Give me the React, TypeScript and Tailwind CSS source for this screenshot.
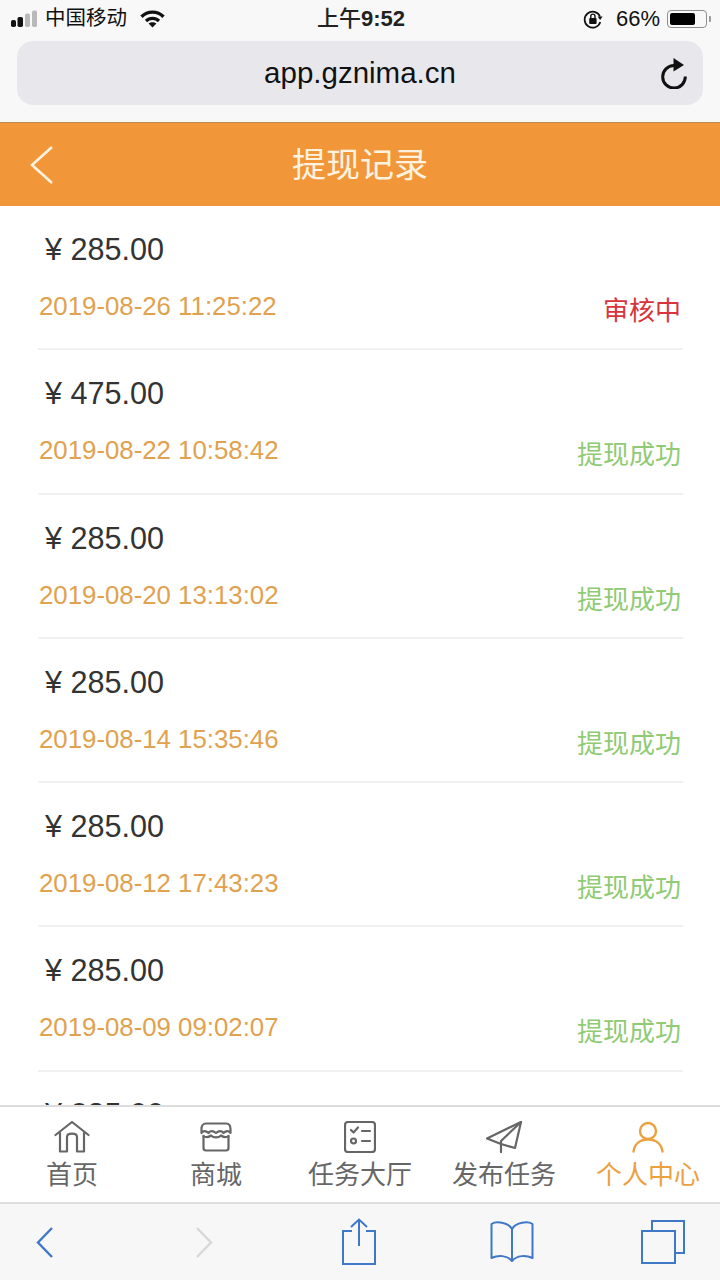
const sans = "font-['Liberation_Sans','Noto_Sans_CJK_SC',sans-serif]";

const records = [
  { amount: "285.00", time: "2019-08-26 11:25:22", status: "审核中", pending: true },
  { amount: "475.00", time: "2019-08-22 10:58:42", status: "提现成功" },
  { amount: "285.00", time: "2019-08-20 13:13:02", status: "提现成功" },
  { amount: "285.00", time: "2019-08-14 15:35:46", status: "提现成功" },
  { amount: "285.00", time: "2019-08-12 17:43:23", status: "提现成功" },
  { amount: "285.00", time: "2019-08-09 09:02:07", status: "提现成功" },
];

function Signal() {
  return (
    <svg width="27" height="18" viewBox="0 0 27 18" className="block">
      <rect x="0" y="10" width="5" height="7" rx="1.8" fill="#111" />
      <rect x="6.5" y="7" width="5.5" height="10" rx="1.8" fill="#111" />
      <rect x="14" y="3.5" width="5" height="13.5" rx="1.8" fill="#b9b9b9" />
      <rect x="21" y="0.5" width="5" height="16.5" rx="1.8" fill="#b9b9b9" />
    </svg>
  );
}

function Wifi() {
  return (
    <svg width="25" height="18" viewBox="0 0 25 18" fill="none" className="block">
      <path d="M1.5 6.8C7.5 .6 17.5 .6 23.5 6.8" stroke="#111" strokeWidth="3.4" />
      <path d="M6 11C9.6 7.4 15.4 7.4 19 11" stroke="#111" strokeWidth="3.2" />
      <path d="M8.6 13.6C10.8 11.7 14.2 11.7 16.4 13.6L12.5 17.6Z" fill="#111" />
    </svg>
  );
}

function RotationLock() {
  return (
    <svg width="20" height="20" viewBox="0 0 20 20" fill="none" className="block">
      <path d="M17 7.5A8 8 0 1 0 17.3 13" stroke="#111" strokeWidth="1.7" />
      <path d="M14.6 7.5H19.6L17.1 11Z" fill="#111" />
      <rect x="6.2" y="9" width="7.4" height="6" rx="1" fill="#111" />
      <path d="M7.8 9V7.2a2.1 2.1 0 0 1 4.2 0V9" stroke="#111" strokeWidth="1.4" />
    </svg>
  );
}

function Battery() {
  return (
    <div className="flex items-center gap-[2px]">
      <div className="w-[40px] h-[18px] rounded-[4px] border border-[#8e8e8e] p-[2px]">
        <div className="w-[25px] h-full rounded-[2px] bg-black" />
      </div>
      <div className="w-[2px] h-[6px] rounded-r-[1px] bg-[#9a9a9a]" />
    </div>
  );
}

function Refresh() {
  return (
    <svg width="28" height="32" viewBox="0 0 28 32" fill="none" className="block">
      <path d="M14 8.5A11.3 11.3 0 1 0 25.3 19.5" stroke="#111" strokeWidth="3" />
      <path d="M13.5 1L24 8L13.5 14.5Z" fill="#111" />
    </svg>
  );
}

function HomeIcon({ c }: { c: string }) {
  return (
    <svg width="36" height="34" viewBox="0 0 36 34" fill="none" stroke={c} strokeWidth="2.2" strokeLinecap="round" strokeLinejoin="round" className="block">
      <path d="M1.5 15L18 2L34.5 15" />
      <path d="M6 13V31.5H13V17C13 12.5 23 12.5 23 17V31.5H30V13" />
    </svg>
  );
}

function ShopIcon({ c }: { c: string }) {
  return (
    <svg width="32" height="30" viewBox="0 0 32 30" fill="none" stroke={c} strokeWidth="2.2" strokeLinecap="round" strokeLinejoin="round" className="block">
      <path d="M6 1.5H26C29 1.5 30.5 4 30.5 7V11C29 8.5 26 8.5 23.5 11C21.5 8.5 19 8.5 16 11C13 8.5 10.5 8.5 8.5 11C6 8.5 3 8.5 1.5 11V7C1.5 4 3 1.5 6 1.5Z" />
      <path d="M3.5 14C6 16 9 15 11 13.5C13.5 16 18.5 16 21 13.5C23 15 26 16 28.5 14" />
      <path d="M3.5 14V26C3.5 27.5 4.5 28.5 6 28.5H26C27.5 28.5 28.5 27.5 28.5 26V14" />
    </svg>
  );
}

function TaskIcon({ c }: { c: string }) {
  return (
    <svg width="32" height="32" viewBox="0 0 32 32" fill="none" stroke={c} strokeWidth="2.2" strokeLinecap="round" strokeLinejoin="round" className="block">
      <rect x="1" y="1" width="30" height="30" rx="3" />
      <path d="M7 9L9.5 11.5L14 6.5" />
      <path d="M18 10H26M18 20H26" />
      <circle cx="9.5" cy="20" r="2.5" />
    </svg>
  );
}

function SendIcon({ c }: { c: string }) {
  return (
    <svg width="36" height="32" viewBox="0 0 36 32" fill="none" stroke={c} strokeWidth="2.2" strokeLinecap="round" strokeLinejoin="round" className="block">
      <path d="M35 1L1 17.5L15 23" />
      <path d="M35 1L29 27L15 23" />
      <path d="M35 1L15 20V31" />
    </svg>
  );
}

function UserIcon({ c }: { c: string }) {
  return (
    <svg width="32" height="32" viewBox="0 0 32 32" fill="none" stroke={c} strokeWidth="2.4" strokeLinecap="round" strokeLinejoin="round" className="block">
      <circle cx="16" cy="10" r="8" />
      <path d="M1.5 30.5C2.5 23 8 18.5 16 18.5C24 18.5 29.5 23 30.5 30.5" />
    </svg>
  );
}

const tabs = [
  { label: "首页", Icon: HomeIcon },
  { label: "商城", Icon: ShopIcon },
  { label: "任务大厅", Icon: TaskIcon },
  { label: "发布任务", Icon: SendIcon },
  { label: "个人中心", Icon: UserIcon, active: true },
];

const blue = "#3f78c6";

export default function App() {
  return (
    <div className={`w-[720px] h-[1280px] flex flex-col overflow-hidden bg-white ${sans}`}>
      <div className="h-[122px] shrink-0 bg-[#f8f8f8] flex flex-col">
        <div className="h-[41px] shrink-0 grid grid-cols-3 items-center pb-[4px] pl-[11px] pr-[9px] text-[#111]">
          <div className="flex items-center">
            <Signal />
            <span className="ml-[7px] text-[20.5px] leading-none">中国移动</span>
            <span className="ml-[13px]"><Wifi /></span>
          </div>
          <div className="text-center text-[22px] leading-none text-[#222]">
            <span className="font-medium">上午</span>
            <span className="font-bold">9:52</span>
          </div>
          <div className="flex items-center justify-end">
            <RotationLock />
            <span className="ml-[13px] text-[22px] leading-none">66%</span>
            <span className="ml-[7px]"><Battery /></span>
          </div>
        </div>
        <div className="mx-[17px] h-[64px] rounded-[16px] bg-[#e8e8ec] flex items-center relative">
          <span className="flex-1 text-center text-[29.5px] leading-none text-[#111]">app.gznima.cn</span>
          <span className="absolute right-[15px] top-[16px]"><Refresh /></span>
        </div>
      </div>

      <div className="h-[84px] shrink-0 bg-[#f1973a] border-t border-t-[#bd8b4b] flex items-center relative">
        <svg width="26" height="40" viewBox="0 0 26 40" fill="none" stroke="#fff3e0" strokeWidth="2.6" className="absolute left-[29px] top-[22px]">
          <path d="M23 2L3 20L23 38" />
        </svg>
        <div className="w-full text-center text-[34px] leading-none text-[#fff3e0]">提现记录</div>
      </div>

      <div className="flex-1 min-h-0 overflow-hidden pl-[38px] pr-[37px]">
        {records.map((r, i) => (
          <div key={i} className="h-[144.3px] pt-[25px] border-b-2 border-b-[#f1f1f1]">
            <div className="pl-[7px] text-[30.6px] leading-[36px] text-[#333333]">¥ {r.amount}</div>
            <div className="flex justify-between items-start">
              <div className="mt-[21px] pl-[1px] text-[25.8px] leading-[36px] text-[#e0a24f]">{r.time}</div>
              <div className={`mt-[26px] mr-[2px] text-[26px] leading-[36px] ${r.pending ? "text-[#d8343c]" : "text-[#8fca74]"}`}>{r.status}</div>
            </div>
          </div>
        ))}
        <div className="pt-[24px] pl-[7px] text-[30.6px] leading-[36px] text-[#333333]">¥ 285.00</div>
      </div>

      <div className="h-[97px] shrink-0 bg-white border-t-2 border-t-[#dcdcdc] flex pt-[13px]">
        {tabs.map(({ label, Icon, active }) => {
          const c = active ? "#eba13f" : "#666666";
          return (
            <div key={label} className="w-[144px] flex flex-col items-center">
              <div className="h-[34px] flex items-center justify-center"><Icon c={c} /></div>
              <div className={`mt-[6px] text-[26px] leading-[30px] whitespace-nowrap ${active ? "text-[#eba13f]" : "text-[#666666]"}`}>{label}</div>
            </div>
          );
        })}
      </div>

      <div className="h-[78px] shrink-0 bg-[#f7f7f7] border-t-2 border-t-[#dedede] flex items-center">
        <svg width="19" height="33" viewBox="0 0 19 33" fill="none" stroke={blue} strokeWidth="2.4" className="ml-[35px] block">
          <path d="M17 2L3 16.5L17 31" />
        </svg>
        <svg width="19" height="33" viewBox="0 0 19 33" fill="none" stroke="#d8d8d8" strokeWidth="2.4" className="ml-[141px] block">
          <path d="M2 2L16 16.5L2 31" />
        </svg>
        <svg width="36" height="48" viewBox="0 0 36 48" fill="none" stroke={blue} strokeWidth="2" className="ml-[127px] block">
          <path d="M11 13H2V46H34V13H25" />
          <path d="M18 28V2M10 9L18 1.5L26 9" />
        </svg>
        <svg width="44" height="42" viewBox="0 0 44 42" fill="none" stroke={blue} strokeWidth="2" strokeLinejoin="round" className="ml-[113px] block">
          <path d="M22 8C18 1 6 0 1.5 3V37C8 34 17 34 22 40C27 34 36 34 42.5 37V3C38 0 26 1 22 8Z" />
          <path d="M22 8V40" />
        </svg>
        <svg width="44" height="44" viewBox="0 0 44 44" fill="none" stroke={blue} strokeWidth="2" className="ml-[107px] block">
          <rect x="1" y="11" width="33" height="32" />
          <path d="M11 11V1H43V33H34" />
        </svg>
      </div>
    </div>
  );
}
